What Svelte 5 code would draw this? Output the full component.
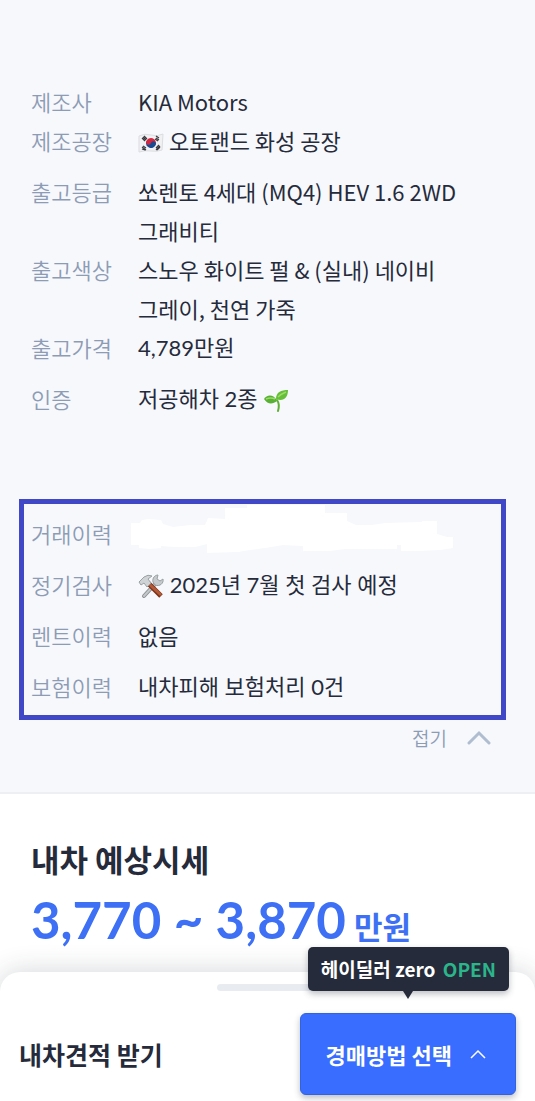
<script>
	let expanded = true;

	const specs = [
		{ label: '제조사', value: 'KIA Motors' },
		{ label: '제조공장', value: '오토랜드 화성 공장', icon: 'flag', spaced: true },
		{ label: '출고등급', value: '쏘렌토 4세대 (MQ4) HEV 1.6 2WD 그래비티' },
		{ label: '출고색상', value: '스노우 화이트 펄 & (실내) 네이비 그레이, 천연 가죽' },
		{ label: '출고가격', value: '4,789만원', numeric: true, spaced: true },
		{ label: '인증', value: '저공해차 2종', numeric: true, icon: 'sprout' }
	];

	const history = [
		{ label: '거래이력', hidden: true, spaced: true },
		{ label: '정기검사', value: '2025년 7월 첫 검사 예정', numeric: true, icon: 'tools', spaced: true },
		{ label: '렌트이력', value: '없음', spaced: true },
		{ label: '보험이력', value: '내차피해 보험처리 0건', numeric: true }
	];

	function toggle() {
		expanded = !expanded;
	}
</script>

<main>
	<section class="details">
		<dl class="list">
			{#each specs as row}
				<div class="row" class:spaced={row.spaced}>
					<dt>{row.label}</dt>
					<dd class:numeric={row.numeric}>
						{#if row.icon === 'flag'}
							<svg class="emoji" viewBox="0 0 26 26" aria-hidden="true">
								<path d="M1 6q6-3 12-1t12-1l-1 16q-5 2-11 1t-12 1z" fill="#f1f1f3" stroke="#dcdde1" />
								<g transform="rotate(18 13 13)">
									<path d="M8 13a5 5 0 0 1 10 0z" fill="#d3263f" />
									<path d="M8 13a5 5 0 0 0 10 0z" fill="#174a91" />
									<circle cx="10.500" cy="13" r="2.500" fill="#d3263f" />
									<circle cx="15.500" cy="13" r="2.500" fill="#174a91" />
								</g>
								<path d="M4 9l3-3M5 10l3-3M6 11l3-3M18 6l3 2M18 8l3 2M17 9l3 2M5 16l3 2M4 17l4 3M4 19l3 1M18 18l3-3M18 20l4-4M19 20l3-3" stroke="#3a3a40" stroke-width="1.200" />
							</svg>
						{/if}
						{row.value}
						{#if row.icon === 'sprout'}
							<svg class="emoji" viewBox="0 0 26 26" aria-hidden="true">
								<path d="M14 13q3 4 1 11" fill="none" stroke="#5fae35" stroke-width="2" stroke-linecap="round" />
								<path d="M14 14C11 7 4 7 1 12c4 6 9 5 13 2z" fill="#58b035" />
								<path d="M13 12C13 5 18 3 25 3c0 8-5 12-12 9z" fill="#66bf38" />
								<path d="M3 12q5-2 9 0M15 10q3-3 8-5" fill="none" stroke="#9bdc66" stroke-width="1.500" />
							</svg>
						{/if}
					</dd>
				</div>
			{/each}
		</dl>

		<dl class="list boxed">
			{#each history as row}
				<div class="row" class:spaced={row.spaced}>
					<dt>{row.label}</dt>
					<dd class:numeric={row.numeric}>
						{#if row.icon === 'tools'}
							<svg class="emoji" viewBox="0 0 26 26" aria-hidden="true">
								<path d="M6 23L18 10" stroke="#8b9093" stroke-width="4" stroke-linecap="round" />
								<path d="M6 23L18 10" stroke="#c3c8ca" stroke-width="2" stroke-linecap="round" />
								<path d="M15 9c-1-4 2-7 5-7l-1 4 3 2 3-2c1 4-3 8-8 6z" fill="#c6cacc" stroke="#9ba0a3" />
								<path d="M10 10L23 23" stroke="#7a3219" stroke-width="5" />
								<path d="M10 10L23 22" stroke="#b55a38" stroke-width="3" />
								<path d="M1 9l5-5q4-3 8-1l-4 3 3 4-4 4-3-4-3 2z" fill="#d0d3d5" stroke="#9ba0a3" />
							</svg>
						{/if}
						{#if row.hidden}
							<svg class="mask" viewBox="131 505 322 48" aria-hidden="true">
								<path d="M131 523H140L142 520 148 519 161 520 163 524 173 527 190 525H205L208 518 225 519V508H247V505H325V513H347V521L356 525H372L385 523 422 522V521H437V534L447 537H453V548L440 550 420 551H401V545H397V549H345L330 551H303V546L283 545 265 548 250 550 238 552 207 553V544L195 547H174L161 546V548L150 549 139 548V545H131Z" fill="#fff" />
							</svg>
						{:else}
							{row.value}
						{/if}
					</dd>
				</div>
			{/each}
		</dl>

		<button class="fold" aria-expanded={expanded} on:click={toggle}>
			접기
			<svg width="24" height="16" viewBox="0 0 24 16" aria-hidden="true">
				<path d="M2 13L12 3l10 10" fill="none" stroke="#b0bdd0" stroke-width="3" stroke-linecap="round" />
			</svg>
		</button>
	</section>

	<section class="price">
		<h2>내차 예상시세</h2>
		<p><strong>3,770 ~ 3,870</strong> <span>만원</span></p>
	</section>

	<footer class="sheet">
		<div class="handle"></div>
		<div class="actions">
			<h3>내차견적 받기</h3>
			<div class="choose">
				<div class="tooltip">헤이딜러 zero <em>OPEN</em></div>
				<button class="primary">
					경매방법 선택
					<svg width="18" height="12" viewBox="0 0 18 12" aria-hidden="true">
						<path d="M2 10l7-7 7 7" fill="none" stroke="#fff" stroke-width="1.500" />
					</svg>
				</button>
			</div>
		</div>
	</footer>
</main>

<style>
	:global(body) {
		margin: 0;
		background: #fff;
	}
	main {
		font-family: 'Noto Sans CJK KR', sans-serif;
		color: #252b3b;
	}
	button {
		font: inherit;
		border: 0;
		cursor: pointer;
	}
	dl,
	dd,
	h2,
	h3,
	p {
		margin: 0;
	}
	.details {
		display: flex;
		flex-direction: column;
		padding: 82px 29px 36px 19px;
		background: #f7f8fc;
		border-bottom: 2px solid #eeeff3;
	}
	.list {
		padding: 0 12px;
		font-size: 22px;
		font-weight: 350;
		line-height: 39px;
	}
	.boxed {
		margin-top: 81px;
		padding: 10px 7px 9px;
		border: 5px solid #4048c8;
	}
	.row {
		display: grid;
		grid-template-columns: 107px 1fr;
	}
	.spaced {
		margin-bottom: 12px;
	}
	dt {
		color: #8d9cb5;
	}
	dd {
		position: relative;
		font-weight: 400;
		word-break: keep-all;
	}
	.numeric {
		font-family: Lato, 'Noto Sans CJK KR', sans-serif;
	}
	.emoji {
		width: 26px;
		height: 26px;
		vertical-align: -6px;
	}
	.mask {
		position: absolute;
		top: -9px;
		left: -7px;
		width: 322px;
		height: 48px;
	}
	.fold {
		display: flex;
		align-items: center;
		align-self: flex-end;
		gap: 20px;
		padding: 0;
		margin: 0 15px 0 0;
		background: none;
		color: #8d9cb5;
		font-size: 19px;
		font-weight: 350;
		line-height: 36px;
	}
	.price {
		padding: 41px 31px 10px;
	}
	h2 {
		font-size: 31px;
		line-height: 48px;
	}
	.price p {
		display: flex;
		align-items: baseline;
		gap: 8px;
		color: #3d70f5;
		line-height: 73px;
		white-space: nowrap;
	}
	.price strong {
		font-family: Lato, sans-serif;
		font-size: 51px;
		font-weight: 700;
	}
	.price span {
		font-size: 31px;
		font-weight: 700;
	}
	.sheet {
		position: relative;
		padding: 12px 19px 6px;
		border-radius: 20px 20px 0 0;
		background: #fff;
		box-shadow: 0 0 28px rgba(37, 43, 59, 0.2);
	}
	.handle {
		width: 101px;
		height: 7px;
		margin: 0 auto 22px;
		border-radius: 4px;
		background: #e8ecf1;
	}
	.actions {
		display: flex;
		align-items: center;
		justify-content: space-between;
	}
	h3 {
		font-size: 25px;
		line-height: 36px;
	}
	.choose {
		position: relative;
	}
	.tooltip {
		position: absolute;
		right: 7px;
		bottom: 104px;
		padding: 0 13px;
		border-radius: 5px;
		background: #252b3b;
		box-shadow: 0 3px 6px rgba(37, 43, 59, 0.3);
		color: #fff;
		font-size: 19px;
		font-weight: 700;
		line-height: 44px;
		white-space: nowrap;
	}
	.tooltip::after {
		content: '';
		position: absolute;
		top: 100%;
		left: 50%;
		margin-left: -5px;
		border: solid transparent;
		border-width: 8px 5px 0;
		border-top-color: #252b3b;
	}
	.tooltip em {
		margin-left: 3px;
		color: #2bb58a;
		font-style: normal;
	}
	.primary {
		display: flex;
		align-items: center;
		gap: 17px;
		height: 82px;
		padding: 0 28px 0 25px;
		border: 1px solid #3262de;
		border-radius: 6px;
		background: #386dff;
		box-shadow: 0 3px 6px rgba(37, 43, 59, 0.3);
		color: #fff;
		font-size: 22px;
		font-weight: 700;
	}
</style>
